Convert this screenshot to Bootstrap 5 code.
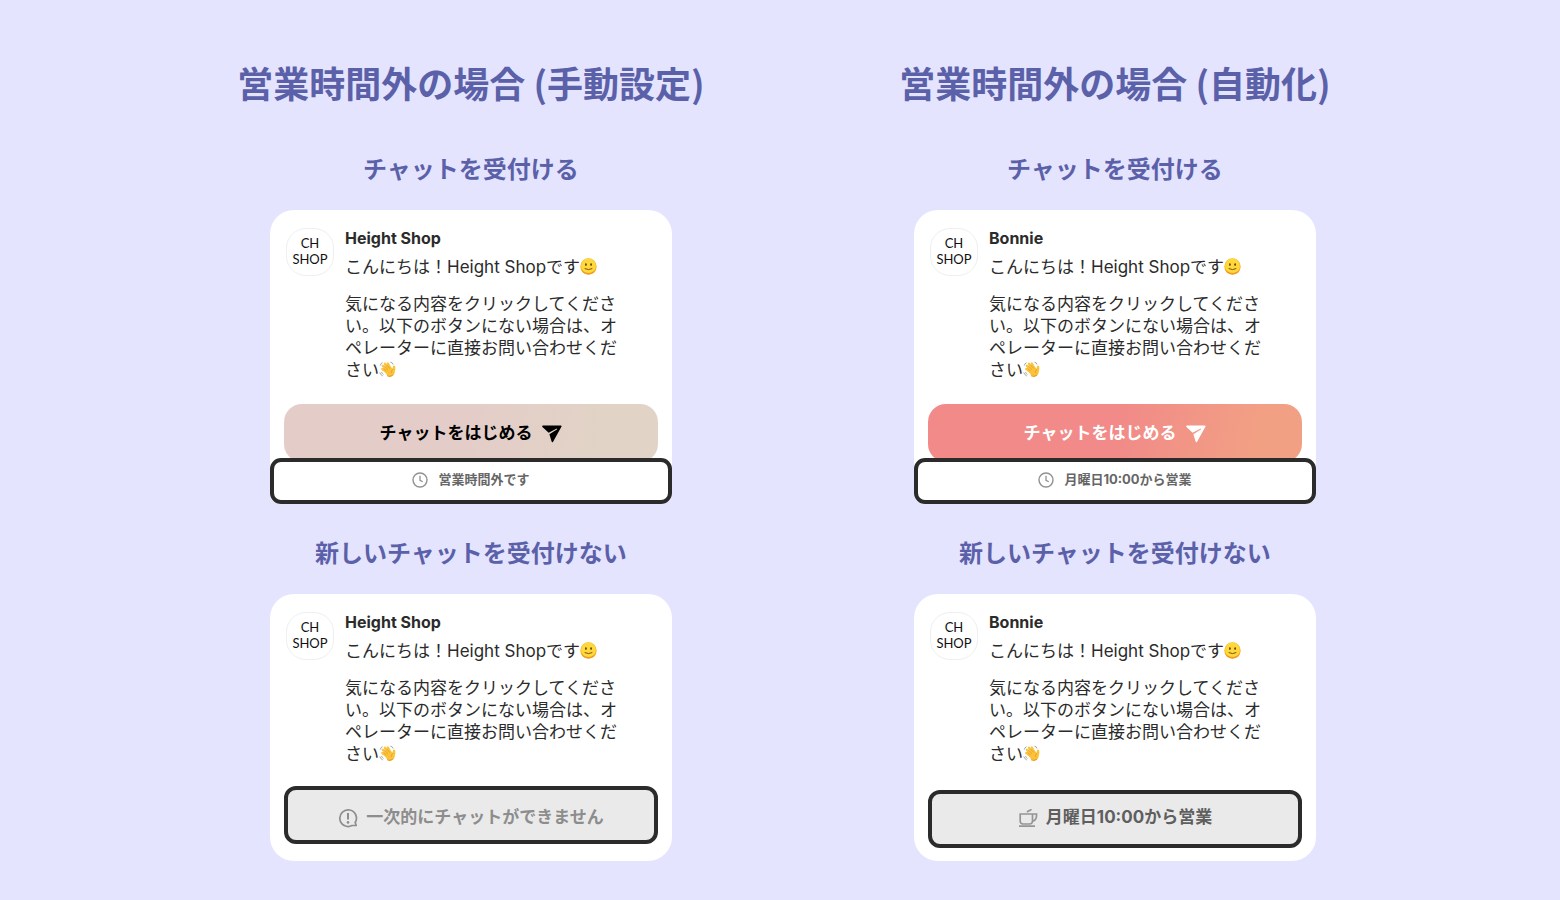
<!DOCTYPE html>
<html lang="ja">
<head>
<meta charset="utf-8">
<meta name="viewport" content="width=device-width, initial-scale=1">
<title>営業時間外の場合</title>
<link href="https://cdn.jsdelivr.net/npm/bootstrap@5.3.0/dist/css/bootstrap.min.css" rel="stylesheet">
<style>
  body { background: #e5e4ff; color: #2b2b2b; font-family: Inter, "Noto Sans CJK JP", sans-serif; }
  .board { padding: 60px 123px 39px 149px; }
  .title, .subtitle { color: #5b61a8; font-family: "Noto Sans CJK JP", sans-serif; font-weight: 700; text-align: center; margin: 0; }
  .title { font-size: 36px; line-height: 44px; margin-bottom: 47px; }
  .subtitle { font-size: 24px; line-height: 34px; margin-bottom: 25px; }
  .panel { width: 100%; max-width: 402px; margin: 0 auto; background: #fff; border-radius: 24px; }
  .panel-open { border-radius: 24px 24px 10px 10px; margin-bottom: 31px; }
  .intro { padding: 18px 16px 0; gap: 11px; }
  .shop-logo { width: 48px; height: 48px; border: 1px solid #efefef; border-radius: 20px; color: #111; font-family: Lato, sans-serif; font-size: 13px; line-height: 16px; padding-bottom: 2px; }
  .sender { font-size: 16px; line-height: 20px; font-weight: 700; }
  .message { font-size: 17px; line-height: 22px; max-width: 276px; }
  .message p { margin: 0 0 15px; }
  .greeting { padding-top: 8px; }
  .emoji { width: 17px; height: 17px; vertical-align: -2px; }
  .actions { padding: 8px 14px 0; }
  .start { height: 58px; border: 0; border-radius: 18px; font-size: 17px; font-weight: 700; gap: 10px; padding: 2px 0 0; }
  .start-muted { background: linear-gradient(100deg, #e4cdc8 50%, #e1d3c6 85%); color: #000; }
  .start-live { background: linear-gradient(100deg, #f18a88 50%, #f2a084 88%); color: #fff; }
  .hours { height: 46px; margin-top: -4px; border: 4px solid #2b2b2b; border-radius: 11px; background: #fff; color: #666; font-size: 13px; font-weight: 700; gap: 10px; padding-bottom: 2px; }
  .closed { padding: 6px 14px 17px; }
  .closed-late { padding: 10px 14px 13px; }
  .notice { height: 58px; border: 4px solid #2b2b2b; border-radius: 12px; background: #eaeaea; color: #8d8d8d; font-size: 17px; font-weight: 700; gap: 8px; padding: 0; }
  .notice-dark { color: #5f5f5f; padding-bottom: 2px; }
  .notice-plain { padding-top: 6px; }
</style>
</head>
<body>
<svg class="d-none" aria-hidden="true">
  <symbol id="smile" viewBox="0 0 17 17">
    <circle cx="8.5" cy="8.5" r="8.2" fill="#f9b52b"/><circle cx="8.5" cy="7.900" r="7.3" fill="#ffd83c"/>
    <path d="M1 11.5a8.2 8.2 0 0 0 15 0q-3.500 3.500-7.500 3.500t-7.500-3.500z" fill="#f09a1f"/>
    <ellipse cx="5.900" cy="6.600" rx=".9" ry="1.300" fill="#69400f"/><ellipse cx="11.100" cy="6.600" rx=".9" ry="1.300" fill="#69400f"/>
    <path d="M5 10.700q3.500 2 7 0" fill="none" stroke="#80500f" stroke-width="1" stroke-linecap="round"/>
  </symbol>
  <symbol id="wave" viewBox="0 0 17 17">
    <g stroke="#fbc23a" stroke-width="2.300" stroke-linecap="round" fill="none">
      <path d="M9 10 3.800 4.700M10 8.500 6 2.800M11.500 7.500 8.800 2.500M7.500 11 3.300 8"/>
    </g>
    <path d="M5 9.500 11 5l2.500 2.700.6-2.600q.6-1.200 1.700-.4.700 1.300.6 2.800l-.8 4.500q-.8 3.400-4 3.700-2.200 0-3.700-1.700z" fill="#fbc23a"/>
    <path d="M5.200 4.800 9 8.600M7.500 3.800l3.200 3.700M4.500 7.500 7.700 10M12.500 12q-.5-2.500 1.500-4" stroke="#dd931d" stroke-width=".6" fill="none"/>
    <path d="M8 14.700q3 1.900 5.800-.6" stroke="#e39a22" stroke-width="1" fill="none"/>
    <path d="M1.300 4.500Q1.500 2.500 3.500 1.700M.8 11.500q.7 2.500 3 3.500M2.500 11q.5 1.700 2 2.500M11.500 1.200q2 .1 2.500 2.300" stroke="#8f8f8f" stroke-width=".8" fill="none"/>
  </symbol>
  <symbol id="send" viewBox="0 0 20 18">
    <path d="M1 .6h17.700q1.300.1.700 1.200l-8.300 15q-.9 1.200-1.500-.2L7.400 9.200l7.800-4.900-.5-.8-8 4.200L.4 1.900Q-.2.900 1 .6z" fill="currentColor"/>
  </symbol>
  <symbol id="clock" viewBox="0 0 16 16">
    <circle cx="8" cy="8" r="7" fill="none" stroke="#919191" stroke-width="1.400"/><path d="M8 3.800v4.500l2.800 1.500" fill="none" stroke="#919191" stroke-width="1.300"/>
  </symbol>
  <symbol id="alert" viewBox="0 0 20 20">
    <path d="M17.200 14.500a8.300 8.300 0 1 0-3.200 3h4.200z" fill="none" stroke="#8d8d8d" stroke-width="1.700" stroke-linejoin="round"/>
    <path d="M10 5v6.500" stroke="#8d8d8d" stroke-width="2"/><circle cx="10" cy="14.400" r="1.300" fill="#8d8d8d"/>
  </symbol>
  <symbol id="cup" viewBox="0 0 20 20">
    <path d="M2.200 6h12.300v7.200q-.2 2.600-2.800 2.800H5q-2.600-.2-2.800-2.800zM14.500 6h4v2q-.2 4.700-4.500 5.300M1 18.200h16" fill="none" stroke="#959595" stroke-width="1.700"/>
    <path d="M9.200 4.400q.1-1.400 2-1.800 1.800-.3 2-1.500" fill="none" stroke="#959595" stroke-width="1.600"/>
  </symbol>
</svg>

<main class="container-fluid board">
  <div class="row g-0">
    <section class="col-6">
      <h1 class="title">営業時間外の場合 (手動設定)</h1>
      <h2 class="subtitle">チャットを受付ける</h2>
      <article class="panel panel-open">
        <div class="intro d-flex align-items-start">
          <div class="shop-logo d-flex flex-shrink-0 align-items-center justify-content-center text-center">CH<br>SHOP</div>
          <div class="message">
            <div class="sender">Height Shop</div>
            <p class="greeting">こんにちは！Height Shopです<svg class="emoji" role="img" aria-label="笑顔"><use href="#smile"/></svg></p>
            <p>気になる内容をクリックしてください。以下のボタンにない場合は、オペレーターに直接お問い合わせください<svg class="emoji" role="img" aria-label="手を振る"><use href="#wave"/></svg></p>
          </div>
        </div>
        <div class="actions">
          <button type="button" class="start start-muted w-100 d-flex align-items-center justify-content-center">チャットをはじめる<svg width="20" height="18" aria-hidden="true"><use href="#send"/></svg></button>
        </div>
        <div class="hours position-relative d-flex align-items-center justify-content-center"><svg width="16" height="16" aria-hidden="true"><use href="#clock"/></svg>営業時間外です</div>
      </article>

      <h2 class="subtitle">新しいチャットを受付けない</h2>
      <article class="panel">
        <div class="intro d-flex align-items-start">
          <div class="shop-logo d-flex flex-shrink-0 align-items-center justify-content-center text-center">CH<br>SHOP</div>
          <div class="message">
            <div class="sender">Height Shop</div>
            <p class="greeting">こんにちは！Height Shopです<svg class="emoji" role="img" aria-label="笑顔"><use href="#smile"/></svg></p>
            <p>気になる内容をクリックしてください。以下のボタンにない場合は、オペレーターに直接お問い合わせください<svg class="emoji" role="img" aria-label="手を振る"><use href="#wave"/></svg></p>
          </div>
        </div>
        <div class="closed">
          <button type="button" class="notice notice-plain w-100 d-flex align-items-center justify-content-center" disabled><svg width="20" height="20" aria-hidden="true"><use href="#alert"/></svg>一次的にチャットができません</button>
        </div>
      </article>
    </section>

    <section class="col-6">
      <h1 class="title">営業時間外の場合 (自動化)</h1>
      <h2 class="subtitle">チャットを受付ける</h2>
      <article class="panel panel-open">
        <div class="intro d-flex align-items-start">
          <div class="shop-logo d-flex flex-shrink-0 align-items-center justify-content-center text-center">CH<br>SHOP</div>
          <div class="message">
            <div class="sender">Bonnie</div>
            <p class="greeting">こんにちは！Height Shopです<svg class="emoji" role="img" aria-label="笑顔"><use href="#smile"/></svg></p>
            <p>気になる内容をクリックしてください。以下のボタンにない場合は、オペレーターに直接お問い合わせください<svg class="emoji" role="img" aria-label="手を振る"><use href="#wave"/></svg></p>
          </div>
        </div>
        <div class="actions">
          <button type="button" class="start start-live w-100 d-flex align-items-center justify-content-center">チャットをはじめる<svg width="20" height="18" aria-hidden="true"><use href="#send"/></svg></button>
        </div>
        <div class="hours position-relative d-flex align-items-center justify-content-center"><svg width="16" height="16" aria-hidden="true"><use href="#clock"/></svg>月曜日10:00から営業</div>
      </article>

      <h2 class="subtitle">新しいチャットを受付けない</h2>
      <article class="panel">
        <div class="intro d-flex align-items-start">
          <div class="shop-logo d-flex flex-shrink-0 align-items-center justify-content-center text-center">CH<br>SHOP</div>
          <div class="message">
            <div class="sender">Bonnie</div>
            <p class="greeting">こんにちは！Height Shopです<svg class="emoji" role="img" aria-label="笑顔"><use href="#smile"/></svg></p>
            <p>気になる内容をクリックしてください。以下のボタンにない場合は、オペレーターに直接お問い合わせください<svg class="emoji" role="img" aria-label="手を振る"><use href="#wave"/></svg></p>
          </div>
        </div>
        <div class="closed-late">
          <button type="button" class="notice notice-dark w-100 d-flex align-items-center justify-content-center" disabled><svg width="20" height="20" aria-hidden="true"><use href="#cup"/></svg>月曜日10:00から営業</button>
        </div>
      </article>
    </section>
  </div>
</main>
<script src="https://cdn.jsdelivr.net/npm/bootstrap@5.3.0/dist/js/bootstrap.bundle.min.js"></script>
</body>
</html>
